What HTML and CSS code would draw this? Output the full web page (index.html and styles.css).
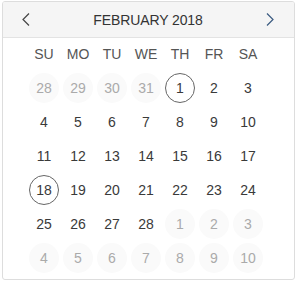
FILE: index.html
```html
<!DOCTYPE html>
<html lang="en">
<head>
  <meta charset="UTF-8" />
  <title>Calendar</title>
  <link rel="stylesheet" href="styles.css">
</head>
<body>
  <div class="calendar">
    <div class="cal-header">
      <span class="nav prev">
        <svg width="8" height="13" viewBox="0 0 8 13"><polyline points="7,0.5 1,6.5 7,12.5" fill="none" stroke="#444" stroke-width="1.2"/></svg>
      </span>
      <span class="title">FEBRUARY 2018</span>
      <span class="nav next">
        <svg width="8" height="13" viewBox="0 0 8 13"><polyline points="1,0.5 7,6.5 1,12.5" fill="none" stroke="#3a5a80" stroke-width="1.2"/></svg>
      </span>
    </div>
    <div class="cal-grid">
      <div class="wd">SU</div><div class="wd">MO</div><div class="wd">TU</div><div class="wd">WE</div><div class="wd">TH</div><div class="wd">FR</div><div class="wd">SA</div>

      <div class="day muted">28</div><div class="day muted">29</div><div class="day muted">30</div><div class="day muted">31</div><div class="day ring">1</div><div class="day">2</div><div class="day">3</div>
      <div class="day">4</div><div class="day">5</div><div class="day">6</div><div class="day">7</div><div class="day">8</div><div class="day">9</div><div class="day">10</div>
      <div class="day">11</div><div class="day">12</div><div class="day">13</div><div class="day">14</div><div class="day">15</div><div class="day">16</div><div class="day">17</div>
      <div class="day ring">18</div><div class="day">19</div><div class="day">20</div><div class="day">21</div><div class="day">22</div><div class="day">23</div><div class="day">24</div>
      <div class="day">25</div><div class="day">26</div><div class="day">27</div><div class="day">28</div><div class="day muted">1</div><div class="day muted">2</div><div class="day muted">3</div>
      <div class="day muted">4</div><div class="day muted">5</div><div class="day muted">6</div><div class="day muted">7</div><div class="day muted">8</div><div class="day muted">9</div><div class="day muted">10</div>
    </div>
  </div>
</body>
</html>
```

FILE: styles.css
```css
body {
  margin: 0;
  font-family: "Liberation Sans", Arial, sans-serif;
  font-size: 14px;
  color: #333;
  background: #fff;
}
.calendar {
  width: 291px;
  height: 277px;
  margin: 1px 0 0 2px;
  border: 1px solid #ddd;
  border-radius: 3px;
  overflow: hidden;
}
.cal-header {
  height: 35px;
  background: #f5f5f5;
  border-bottom: 1px solid #e3e3e3;
  display: flex;
  align-items: center;
  justify-content: space-between;
  padding: 0 20px 0 19px;
}
.nav {
  display: flex;
  align-items: center;
  height: 13px;
}
.title {
  color: #333;
  letter-spacing: -0.1px;
}
.cal-grid {
  display: grid;
  grid-template-columns: repeat(7, 30px);
  grid-auto-rows: 30px;
  gap: 4px;
  padding: 1px 0 0 26px;
}
.wd {
  display: flex;
  align-items: center;
  justify-content: center;
  color: #555;
}
.day {
  display: flex;
  align-items: center;
  justify-content: center;
  border-radius: 50%;
  color: #3a3a3a;
  box-sizing: border-box;
}
.day.muted {
  background: #fafafa;
  color: #aaa;
}
.day.ring {
  border: 1px solid #666;
}
```
